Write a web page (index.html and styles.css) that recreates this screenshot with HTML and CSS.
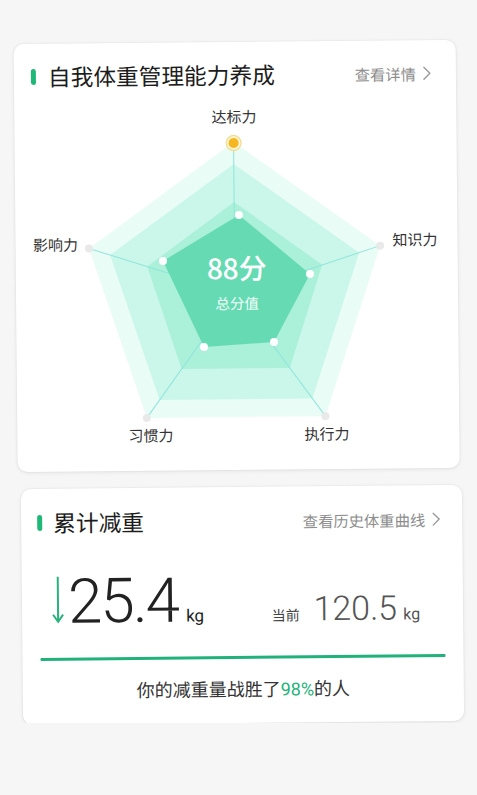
FILE: index.html
```html
<!DOCTYPE html>
<html lang="zh-CN">
<head>
<meta charset="utf-8">
<title>体重管理</title>
<link rel="stylesheet" href="styles.css">
</head>
<body>
<div class="page">
  <section class="card card-ability">
    <header class="card-head">
      <div class="head-title"><span class="mark"></span><h2>自我体重管理能力养成</h2></div>
      <a class="head-link">查看详情<svg class="chev" width="8" height="14" viewBox="0 0 8 14"><path d="M1 1l6 6-6 6" fill="none" stroke="#9a9a9a" stroke-width="1.4" stroke-linecap="round" stroke-linejoin="round"/></svg></a>
    </header>
    <svg class="radar" width="442" height="350" viewBox="0 0 442 350">
      <polygon points="219,42 364.6,147 308.3,317 129.7,317 73.4,147" fill="#eafcf6"/>
      <polygon points="219,64 343.6,153.8 295.4,299.2 142.6,299.2 94.4,153.8" fill="#cbf7ea"/>
      <polygon points="219,102 306.5,165.6 273.1,268.4 164.9,268.4 131.5,165.6" fill="#abf0d9"/>
      <g stroke="#8fe5dc" stroke-width="1">
        <line x1="219" y1="194" x2="219" y2="42"/>
        <line x1="219" y1="194" x2="364.6" y2="147"/>
        <line x1="219" y1="194" x2="308.3" y2="317"/>
        <line x1="219" y1="194" x2="129.7" y2="317"/>
        <line x1="219" y1="194" x2="73.4" y2="147"/>
      </g>
      <polygon points="223.7,115 294.2,174.7 257.5,242.3 187.5,246.7 147.3,160.3" fill="#66dbb3"/>
      <g fill="#ffffff">
        <circle cx="223.7" cy="115" r="4"/>
        <circle cx="294.2" cy="174.7" r="4"/>
        <circle cx="257.5" cy="242.3" r="4"/>
        <circle cx="187.5" cy="246.7" r="4"/>
        <circle cx="147.3" cy="160.3" r="4"/>
      </g>
      <circle cx="219" cy="43" r="7.5" fill="#fdf3cf" stroke="#f3d77a" stroke-width="1"/>
      <circle cx="219" cy="43" r="5" fill="#f5b620"/>
      <g fill="#e9e9e9">
        <circle cx="364.6" cy="147" r="4"/>
        <circle cx="308.3" cy="317" r="4"/>
        <circle cx="129.7" cy="317" r="4"/>
        <circle cx="73.4" cy="147" r="4"/>
      </g>
      <g class="lbl">
        <text x="219.7" y="22.5" text-anchor="middle">达标力</text>
        <text x="377" y="147" text-anchor="start">知识力</text>
        <text x="62.5" y="149" text-anchor="end">影响力</text>
        <text x="133.6" y="340.5" text-anchor="middle">习惯力</text>
        <text x="309.6" y="340.5" text-anchor="middle">执行力</text>
      </g>
      <text class="score" x="221" y="179" text-anchor="middle">88分</text>
      <text class="score-sub" x="221" y="209" text-anchor="middle">总分值</text>
    </svg>
  </section>

  <section class="card card-loss">
    <header class="card-head">
      <div class="head-title"><span class="mark"></span><h2>累计减重</h2></div>
      <a class="head-link">查看历史体重曲线<svg class="chev" width="8" height="14" viewBox="0 0 8 14"><path d="M1 1l6 6-6 6" fill="none" stroke="#9a9a9a" stroke-width="1.4" stroke-linecap="round" stroke-linejoin="round"/></svg></a>
    </header>
    <div class="stats">
      <div class="lost"><svg class="arrow" width="12" height="48" viewBox="0 0 12 48"><path d="M6 1v45" stroke="#27b47c" stroke-width="2" fill="none"/><path d="M1 39l5 7 5-7" stroke="#27b47c" stroke-width="2" fill="none" stroke-linejoin="miter"/></svg><span class="big">25.4</span><span class="unit">kg</span></div>
      <div class="now"><span class="now-label">当前</span><span class="mid">120.5</span><span class="unit unit-sm">kg</span></div>
    </div>
    <div class="bar"></div>
    <p class="beat">你的减重量战胜了<em>98%</em>的人</p>
  </section>
</div>
</body>
</html>
```

FILE: styles.css
```css
html, body {
  margin: 0;
  padding: 0;
}
body {
  background: #f6f6f6;
  font-family: "Noto Sans CJK SC", "Noto Sans", sans-serif;
  color: #222;
}
.page {
  padding-top: 42px;
  transform: rotate(-0.55deg);
  transform-origin: 238px 397px;
}
.card {
  background: #fff;
  border-radius: 10px;
  box-shadow: 0 1px 4px rgba(0, 0, 0, 0.08), 0 0 0 1px rgba(0, 0, 0, 0.025);
  box-sizing: border-box;
}
.card-ability {
  margin-left: 17px;
  width: 442px;
  height: 428px;
}
.card-loss {
  margin-left: 20px;
  margin-top: 17px;
  width: 441px;
  height: 236px;
}
.card-head {
  display: flex;
  align-items: center;
  justify-content: space-between;
}
.card-ability .card-head {
  padding: 18px 25px 0 17px;
}
.card-loss .card-head {
  padding: 19px 22px 0 16px;
}
.head-title {
  display: flex;
  align-items: center;
}
.mark {
  width: 5px;
  height: 16px;
  border-radius: 3px;
  background: #1fb878;
  margin-right: 12px;
}
.card-loss .mark {
  margin-right: 11px;
}
.card-head h2 {
  margin: 0;
  font-size: 22.7px;
  line-height: 30px;
  font-weight: 400;
  color: #1c1c1c;
}
.head-link {
  display: flex;
  align-items: center;
  font-size: 15.3px;
  line-height: 22px;
  color: #8d8d8d;
}
.chev {
  margin-left: 7px;
}
.radar {
  display: block;
  margin-top: 10px;
}
.lbl text {
  font-size: 15px;
  fill: #333;
}
.score {
  font-family: "Noto Sans CJK SC", sans-serif;
  font-size: 28px;
  font-weight: 500;
  fill: #fff;
}
.score-sub {
  font-size: 14.5px;
  fill: #f2fffa;
}
.stats {
  display: flex;
  justify-content: space-between;
  align-items: baseline;
  margin-top: 33px;
  padding: 0 43px 0 30px;
  height: 62px;
}
.lost, .now {
  white-space: nowrap;
  line-height: 62px;
}
.arrow {
  vertical-align: baseline;
  margin-bottom: -1px;
}
.big {
  font-family: Roboto, "Liberation Sans", sans-serif;
  font-weight: 300;
  font-size: 62px;
  letter-spacing: -2px;
  color: #222;
  margin-left: 4px;
}
.unit {
  font-family: Roboto, "Liberation Sans", sans-serif;
  font-size: 17px;
  color: #222;
  margin-left: 8px;
}
.now-label {
  font-size: 14px;
  color: #444;
}
.mid {
  font-family: Roboto, "Liberation Sans", sans-serif;
  font-weight: 300;
  font-size: 34px;
  color: #555;
  margin-left: 14px;
}
.unit-sm {
  font-size: 16px;
  color: #555;
  margin-left: 6px;
}
.bar {
  height: 3px;
  background: #20b27a;
  margin: 25px 18px 0 18px;
  border-radius: 1px;
}
.beat {
  margin: 16px 0 0;
  text-align: center;
  font-size: 18px;
  line-height: 26px;
  color: #333;
}
.beat em {
  font-style: normal;
  font-family: Roboto, "Noto Sans", sans-serif;
  color: #1db37a;
}
```
